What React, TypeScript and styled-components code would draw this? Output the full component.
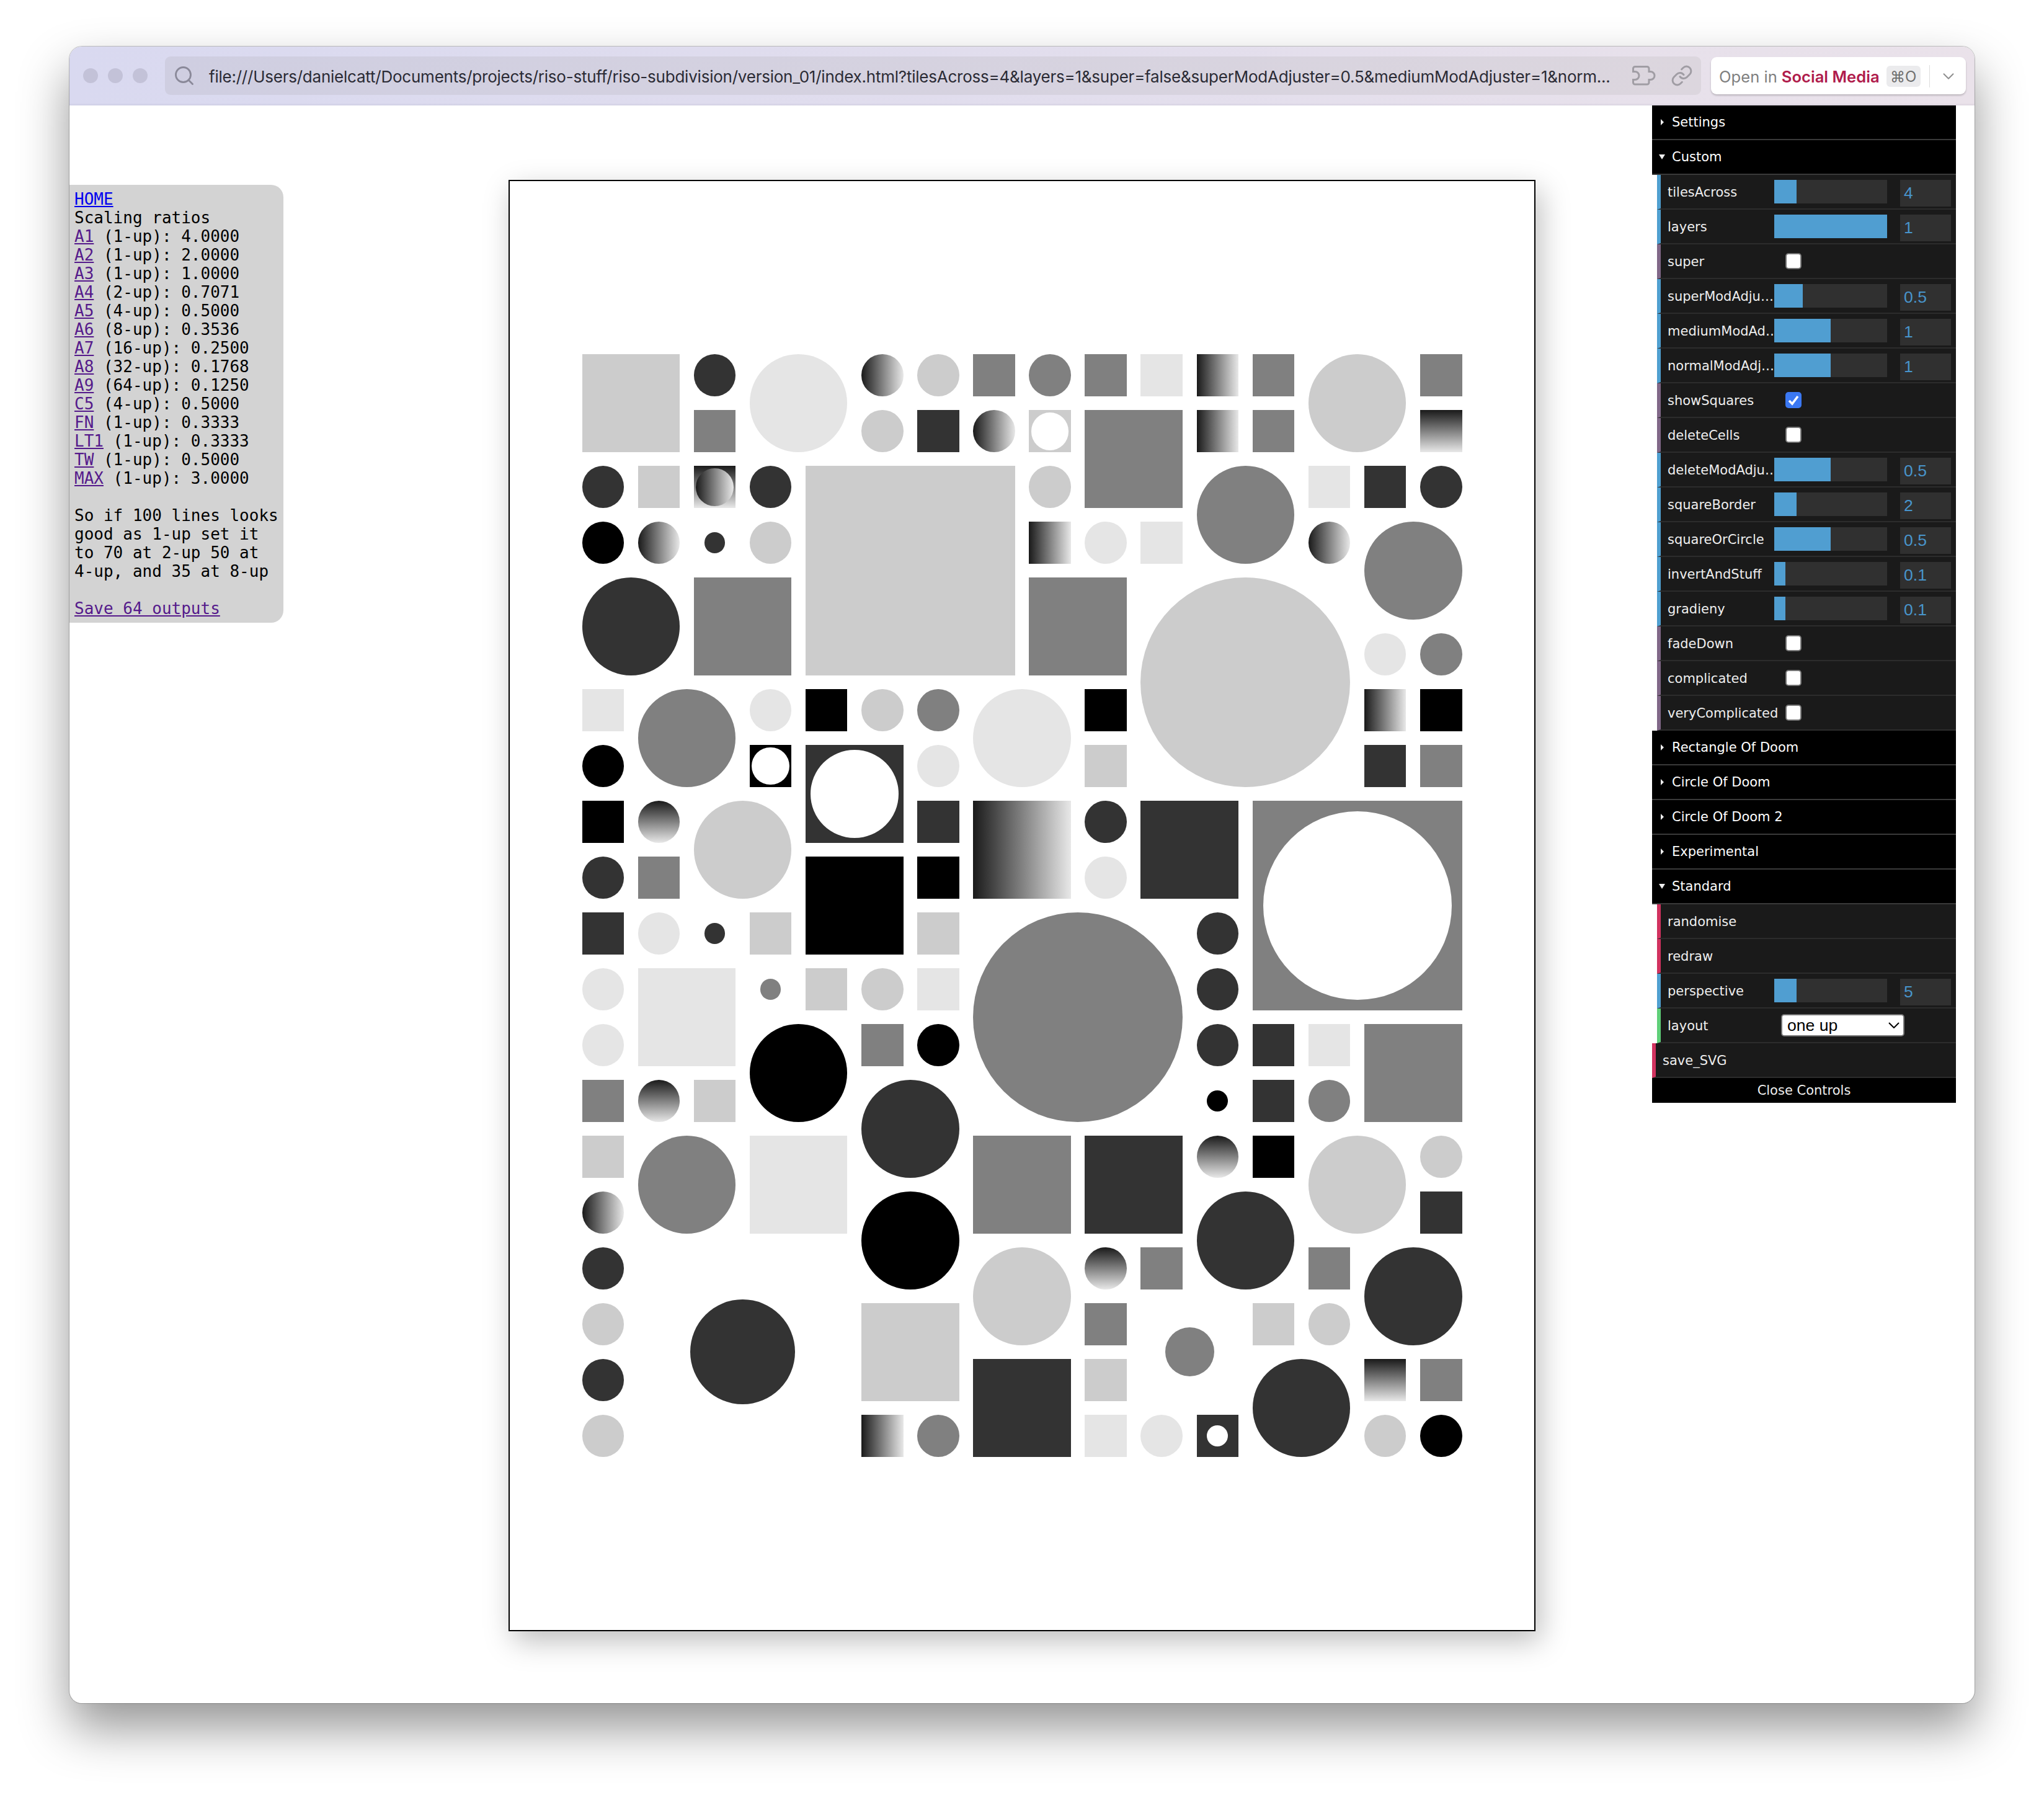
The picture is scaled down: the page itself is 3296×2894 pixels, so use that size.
import React from 'react';
import styled, { createGlobalStyle } from 'styled-components';
import { ChevronDown, Link, Search } from 'lucide-react';

const GlobalStyle = createGlobalStyle`
  html, body {
    margin: 0;
    background: #fff;
  }
`;

const Stage = styled.div`
  width: 3296px;
  height: 2894px;
  padding: 75px 112px 0;
  box-sizing: border-box;
  overflow: hidden;
`;

const Browser = styled.div`
  height: 2671px;
  display: flex;
  flex-direction: column;
  background: #fff;
  border-radius: 20px;
  box-shadow: 0 0 0 1px rgba(0, 0, 0, 0.22), 0 40px 80px rgba(0, 0, 0, 0.42);
`;

const Toolbar = styled.div`
  height: 95px;
  flex: none;
  box-sizing: border-box;
  display: flex;
  align-items: center;
  padding: 0 14px 2px 22px;
  border-radius: 20px 20px 0 0;
  background: linear-gradient(90deg, #d9d9f0, #eae2ea);
  box-shadow: inset 0 -2px 2px rgba(90, 90, 120, 0.08);
`;

const Dots = styled.div`
  display: flex;
  gap: 16px;
  margin-right: 28px;
`;

const Dot = styled.span`
  width: 24px;
  height: 24px;
  border-radius: 50%;
  background: #c3c2d8;
`;

const AddressBar = styled.div`
  width: 2477px;
  height: 62px;
  box-sizing: border-box;
  display: flex;
  align-items: center;
  padding: 0 10px 0 13px;
  margin-right: 16px;
  border-radius: 9px;
  background: linear-gradient(90deg, #cfcee1, #dcd6de);
  color: #8a8999;
`;

const Url = styled.span`
  width: 2260px;
  margin: 4px 0 0 22px;
  flex: none;
  font: 26px Inter, 'Liberation Sans', sans-serif;
  letter-spacing: -0.23px;
  color: #2b2b35;
  white-space: nowrap;
`;

const BarIcons = styled.div`
  display: flex;
  align-items: center;
  gap: 24px;
  margin-left: 35px;
  color: #a09da4;
`;

const OpenButton = styled.div`
  width: 411px;
  height: 60px;
  box-sizing: border-box;
  display: flex;
  align-items: center;
  padding: 3px 0 0 13px;
  border-radius: 9px;
  background: #fff;
  box-shadow: 0 2px 3px rgba(0, 0, 0, 0.2);
  font: 25.6px Inter, 'Liberation Sans', sans-serif;
  color: #7f7f7f;
  white-space: nowrap;
`;

const Brand = styled.b`
  margin-left: 7px;
  font-weight: 600;
  color: #b01c4c;
`;

const Shortcut = styled.span`
  width: 55px;
  height: 34px;
  margin-left: 11px;
  display: flex;
  align-items: center;
  justify-content: center;
  border-radius: 6px;
  background: #ebebed;
  color: #6f6f6f;
  font-size: 24px;
`;

const Divider = styled.span`
  width: 1px;
  height: 36px;
  margin: 0 15px 0 14px;
  background: #ddd;
`;

const Page = styled.div`
  position: relative;
  flex: 1;
  display: flex;
  justify-content: center;
  padding-top: 120px;
`;

const Notes = styled.pre`
  position: absolute;
  left: 0;
  top: 128px;
  width: 345px;
  height: 706px;
  box-sizing: border-box;
  margin: 0;
  padding: 8px 8px 0;
  border-radius: 0 20px 20px 0;
  background: #d3d3d3;
  font: 26px 'DejaVu Sans Mono', monospace;
  color: #000;
  a {
    color: #551a8b;
  }
  a.fresh {
    color: #0000ee;
  }
`;

const Sheet = styled.div`
  width: 1656px;
  height: 2340px;
  box-sizing: border-box;
  display: flex;
  align-items: center;
  justify-content: center;
  border: 2.5px solid #000;
  background: #fff;
  box-shadow: 8px 16px 44px rgba(0, 0, 0, 0.26);
`;

const Board = styled.div`
  display: grid;
  grid-template-columns: repeat(16, 67.6px);
  grid-template-rows: repeat(20, 67.6px);
  gap: 22.4px 22.5px;
`;

const Cell = styled.div<{ $c: number; $r: number; $n: number; $round: boolean; $fill: string; $scale: number }>`
  grid-column: ${(p) => p.$c + 1} / span ${(p) => p.$n};
  grid-row: ${(p) => p.$r + 1} / span ${(p) => p.$n};
  place-self: center;
  width: ${(p) => p.$scale * 100}%;
  aspect-ratio: 1;
  display: flex;
  align-items: center;
  justify-content: center;
  background: ${(p) => p.$fill};
  border-radius: ${(p) => (p.$round ? '50%' : '0')};
`;

const Inner = styled.div<{ $fill: string; $scale: number }>`
  width: ${(p) => p.$scale * 100}%;
  aspect-ratio: 1;
  border-radius: 50%;
  background: ${(p) => p.$fill};
`;

const Gui = styled.div`
  position: absolute;
  top: 0;
  right: 30px;
  width: 490px;
  font: 21px 'DejaVu Sans', sans-serif;
  color: #eee;
`;

const FolderTitle = styled.div`
  height: 56px;
  box-sizing: border-box;
  display: flex;
  align-items: center;
  border-bottom: 2px solid #3a3a3a;
  background: #000;
  color: #fff;
`;

const Caret = styled.span`
  width: 32px;
  display: flex;
  justify-content: center;
`;

const CaretShape = styled.i<{ $open: boolean }>`
  width: 0;
  height: 0;
  ${(p) =>
    p.$open
      ? `border-left: 5px solid transparent; border-right: 5px solid transparent; border-top: 8px solid #eee;`
      : `border-top: 5px solid transparent; border-bottom: 5px solid transparent; border-left: 5px solid #eee;`}
`;

const Nested = styled.div`
  margin-left: 8px;
`;

const Row = styled.div<{ $accent: string }>`
  height: 56px;
  box-sizing: border-box;
  display: flex;
  align-items: center;
  padding: 0 8px 0 11px;
  border-left: 6px solid ${(p) => p.$accent};
  border-bottom: 2px solid #2c2c2c;
  background: #1a1a1a;
`;

const Label = styled.span`
  width: 180px;
  margin-right: -8px;
  padding-top: 1px;
  flex: none;
  white-space: nowrap;
  overflow: hidden;
  text-overflow: ellipsis;
`;

const Track = styled.div`
  width: 182px;
  height: 38px;
  flex: none;
  align-self: flex-start;
  margin-top: 8px;
  background: #303030;
`;

const Fill = styled.div<{ $pct: number }>`
  width: ${(p) => p.$pct}%;
  height: 100%;
  background: #509ed1;
`;

const NumberBox = styled.div`
  width: 82px;
  height: 43px;
  flex: none;
  align-self: flex-start;
  box-sizing: border-box;
  margin: 8px 0 0 21px;
  padding-left: 6px;
  background: #303030;
  color: #4895cc;
  font: 26.6px/42px 'Liberation Sans', sans-serif;
`;

const Check = styled.span<{ $on: boolean }>`
  width: 26px;
  height: 26px;
  margin-left: 18px;
  box-sizing: border-box;
  display: flex;
  align-items: center;
  justify-content: center;
  border-radius: 5px;
  border: ${(p) => (p.$on ? 'none' : '2px solid #767676')};
  background: ${(p) => (p.$on ? '#3b78f2' : '#fff')};
`;

const SelectBox = styled.div`
  width: 199px;
  height: 36px;
  box-sizing: border-box;
  display: flex;
  align-items: center;
  justify-content: space-between;
  margin-left: 11px;
  padding: 0 6px 0 8px;
  border: 2px solid #767676;
  border-radius: 5px;
  background: #fff;
  color: #000;
  font: 26.6px 'Liberation Sans', sans-serif;
`;

const CloseBar = styled.div`
  height: 40px;
  display: flex;
  align-items: center;
  justify-content: center;
  background: #000;
  color: #eee;
`;

const NUMBER = '#4f9fd0';
const BOOL = '#806787';
const BUTTON = '#d1325f';
const PICK = '#5fcf78';

const DARK = '#333';
const MID = '#808080';
const LIGHT = '#ccc';
const PALE = '#e5e5e5';
const BLACK = '#000';
const WHITE = '#fff';
const SIDE = 'linear-gradient(90deg, #1a1a1a, #e8e8e8)';
const DOWN = 'linear-gradient(180deg, #1a1a1a, #e8e8e8)';

type Tile = {
  c: number;
  r: number;
  n: number;
  round: boolean;
  fill: string;
  scale?: number;
  inner?: string;
  innerScale?: number;
};

const sq = (c: number, r: number, fill: string, n = 1, inner?: string, innerScale = 0.9): Tile => ({
  c,
  r,
  n,
  round: false,
  fill,
  inner,
  innerScale,
});
const ci = (c: number, r: number, fill: string, n = 1, scale = 1): Tile => ({ c, r, n, round: true, fill, scale });

const tiles: Tile[] = [
  sq(0, 0, LIGHT, 2), ci(2, 0, DARK), sq(2, 1, MID), ci(3, 0, PALE, 2), ci(5, 0, SIDE), ci(6, 0, LIGHT),
  sq(7, 0, MID), ci(8, 0, MID), sq(9, 0, MID), sq(10, 0, PALE), sq(11, 0, SIDE), sq(12, 0, MID),
  ci(13, 0, LIGHT, 2), sq(15, 0, MID),
  ci(5, 1, LIGHT), sq(6, 1, DARK), ci(7, 1, SIDE), sq(8, 1, LIGHT, 1, WHITE), sq(9, 1, MID, 2), sq(11, 1, SIDE),
  sq(12, 1, MID), sq(15, 1, DOWN),
  ci(0, 2, DARK), sq(1, 2, LIGHT), sq(2, 2, DOWN, 1, SIDE), ci(3, 2, DARK), sq(4, 2, LIGHT, 4), ci(8, 2, LIGHT),
  ci(11, 2, MID, 2), sq(13, 2, PALE), sq(14, 2, DARK), ci(15, 2, DARK),
  ci(0, 3, BLACK), ci(1, 3, SIDE), ci(2, 3, DARK, 1, 0.5), ci(3, 3, LIGHT), sq(8, 3, SIDE), ci(9, 3, PALE),
  sq(10, 3, PALE), ci(13, 3, SIDE), ci(14, 3, MID, 2),
  ci(0, 4, DARK, 2), sq(2, 4, MID, 2), sq(8, 4, MID, 2), ci(10, 4, LIGHT, 4),
  ci(14, 5, PALE), ci(15, 5, MID),
  sq(0, 6, PALE), ci(1, 6, MID, 2), ci(3, 6, PALE), sq(4, 6, BLACK), ci(5, 6, LIGHT), ci(6, 6, MID),
  ci(7, 6, PALE, 2), sq(9, 6, BLACK), sq(14, 6, SIDE), sq(15, 6, BLACK),
  ci(0, 7, BLACK), sq(3, 7, BLACK, 1, WHITE), sq(4, 7, DARK, 2, WHITE), ci(6, 7, PALE), sq(9, 7, LIGHT),
  sq(14, 7, DARK), sq(15, 7, MID),
  sq(0, 8, BLACK), ci(1, 8, DOWN), ci(2, 8, LIGHT, 2), sq(6, 8, DARK), sq(7, 8, SIDE, 2), ci(9, 8, DARK),
  sq(10, 8, DARK, 2), sq(12, 8, MID, 4, WHITE),
  ci(0, 9, DARK), sq(1, 9, MID), sq(4, 9, BLACK, 2), sq(6, 9, BLACK), ci(9, 9, PALE),
  sq(0, 10, DARK), ci(1, 10, PALE), ci(2, 10, DARK, 1, 0.5), sq(3, 10, LIGHT), sq(6, 10, LIGHT),
  ci(7, 10, MID, 4), ci(11, 10, DARK),
  ci(0, 11, PALE), sq(1, 11, PALE, 2), ci(3, 11, MID, 1, 0.5), sq(4, 11, LIGHT), ci(5, 11, LIGHT),
  sq(6, 11, PALE), ci(11, 11, DARK),
  ci(0, 12, PALE), ci(3, 12, BLACK, 2), sq(5, 12, MID), ci(6, 12, BLACK), ci(11, 12, DARK), sq(12, 12, DARK),
  sq(13, 12, PALE), sq(14, 12, MID, 2),
  sq(0, 13, MID), ci(1, 13, DOWN), sq(2, 13, LIGHT), ci(5, 13, DARK, 2), ci(11, 13, BLACK, 1, 0.5),
  sq(12, 13, DARK), ci(13, 13, MID),
  sq(0, 14, LIGHT), ci(1, 14, MID, 2), sq(3, 14, PALE, 2), sq(7, 14, MID, 2), sq(9, 14, DARK, 2), ci(11, 14, DOWN),
  sq(12, 14, BLACK), ci(13, 14, LIGHT, 2), ci(15, 14, LIGHT),
  ci(0, 15, SIDE), ci(5, 15, BLACK, 2), ci(11, 15, DARK, 2), sq(15, 15, DARK),
  ci(0, 16, DARK), ci(1, 16, DARK, 4, 0.5), ci(7, 16, LIGHT, 2), ci(9, 16, DOWN), sq(10, 16, MID), sq(13, 16, MID),
  ci(14, 16, DARK, 2),
  ci(0, 17, LIGHT), sq(5, 17, LIGHT, 2), sq(9, 17, MID), ci(10, 17, MID, 2, 0.5), sq(12, 17, LIGHT), ci(13, 17, LIGHT),
  ci(0, 18, DARK), sq(7, 18, DARK, 2), sq(9, 18, LIGHT), ci(12, 18, DARK, 2), sq(14, 18, DOWN), sq(15, 18, MID),
  ci(0, 19, LIGHT), sq(5, 19, SIDE), ci(6, 19, MID), sq(9, 19, PALE), ci(10, 19, PALE),
  sq(11, 19, DARK, 1, WHITE, 0.5), ci(14, 19, LIGHT), ci(15, 19, BLACK),
];

const ratios: [string, string, string][] = [
  ['A1', '1', '4.0000'], ['A2', '1', '2.0000'], ['A3', '1', '1.0000'], ['A4', '2', '0.7071'],
  ['A5', '4', '0.5000'], ['A6', '8', '0.3536'], ['A7', '16', '0.2500'], ['A8', '32', '0.1768'],
  ['A9', '64', '0.1250'], ['C5', '4', '0.5000'], ['FN', '1', '0.3333'], ['LT1', '1', '0.3333'],
  ['TW', '1', '0.5000'], ['MAX', '1', '3.0000'],
];

const sliders: { name: string; pct?: number; value?: string; on?: boolean }[] = [
  { name: 'tilesAcross', pct: 19.6, value: '4' },
  { name: 'layers', pct: 100, value: '1' },
  { name: 'super', on: false },
  { name: 'superModAdjuster', pct: 25, value: '0.5' },
  { name: 'mediumModAdjuster', pct: 50, value: '1' },
  { name: 'normalModAdjuster', pct: 50, value: '1' },
  { name: 'showSquares', on: true },
  { name: 'deleteCells', on: false },
  { name: 'deleteModAdjuster', pct: 50, value: '0.5' },
  { name: 'squareBorder', pct: 20, value: '2' },
  { name: 'squareOrCircle', pct: 50, value: '0.5' },
  { name: 'invertAndStuff', pct: 10, value: '0.1' },
  { name: 'gradieny', pct: 10, value: '0.1' },
  { name: 'fadeDown', on: false },
  { name: 'complicated', on: false },
  { name: 'veryComplicated', on: false },
];

const Folder = ({ title, open = false }: { title: string; open?: boolean }) => (
  <FolderTitle>
    <Caret>
      <CaretShape $open={open} />
    </Caret>
    {title}
  </FolderTitle>
);

const SliderRow = ({ name, pct, value }: { name: string; pct: number; value: string }) => (
  <Row $accent={NUMBER}>
    <Label>{name}</Label>
    <Track>
      <Fill $pct={pct} />
    </Track>
    <NumberBox>{value}</NumberBox>
  </Row>
);

const CheckRow = ({ name, on }: { name: string; on: boolean }) => (
  <Row $accent={BOOL}>
    <Label>{name}</Label>
    <Check $on={on}>
      {on && (
        <svg width="20" height="20" viewBox="0 0 20 20">
          <path d="M3 11 L8 16 L17 4" fill="none" stroke="#fff" strokeWidth="3.6" />
        </svg>
      )}
    </Check>
  </Row>
);

const PuzzleIcon = () => (
  <svg width="38" height="32" viewBox="0 0 38 32" fill="none" stroke="currentColor" strokeWidth="3">
    <path d="M4.5 1.5 H24 a3 3 0 0 1 3 3 V9.5 h2.5 a6.5 6.5 0 0 1 0 13 H27 V27 a3 3 0 0 1 -3 3 H4.5 a3 3 0 0 1 -3 -3 V22.5 h3 a6.5 6.5 0 0 0 0 -13 h-3 V4.5 a3 3 0 0 1 3 -3 Z" />
  </svg>
);

const SelectChevron = () => (
  <svg width="18" height="10" viewBox="0 0 18 10" fill="none" stroke="#000" strokeWidth="2">
    <path d="M1 1 L9 9 L17 1" />
  </svg>
);

export default function App() {
  return (
    <>
      <GlobalStyle />
      <Stage>
        <Browser>
          <Toolbar>
            <Dots>
              <Dot />
              <Dot />
              <Dot />
            </Dots>
            <AddressBar>
              <Search size={36} strokeWidth={1.9} />
              <Url>
                file:///Users/danielcatt/Documents/projects/riso-stuff/riso-subdivision/version_01/index.html?tilesAcross=4&amp;layers=1&amp;super=false&amp;superModAdjuster=0.5&amp;mediumModAdjuster=1&amp;norm...
              </Url>
              <BarIcons>
                <PuzzleIcon />
                <Link size={36} strokeWidth={2} />
              </BarIcons>
            </AddressBar>
            <OpenButton>
              Open in
              <Brand>Social Media</Brand>
              <Shortcut>⌘O</Shortcut>
              <Divider />
              <ChevronDown size={30} strokeWidth={1.6} color="#8f8f8f" />
            </OpenButton>
          </Toolbar>
          <Page>
            <Notes>
              <a className="fresh" href="#home">HOME</a>
              {'\nScaling ratios\n'}
              {ratios.map(([size, up, ratio]) => (
                <React.Fragment key={size}>
                  <a href={`#${size}`}>{size}</a>
                  {` (${up}-up): ${ratio}\n`}
                </React.Fragment>
              ))}
              {'\nSo if 100 lines looks\ngood as 1-up set it\nto 70 at 2-up 50 at\n4-up, and 35 at 8-up\n\n'}
              <a href="#save">Save 64 outputs</a>
            </Notes>
            <Sheet>
              <Board>
                {tiles.map((t) => (
                  <Cell
                    key={`${t.c}-${t.r}`}
                    $c={t.c}
                    $r={t.r}
                    $n={t.n}
                    $round={t.round}
                    $fill={t.fill}
                    $scale={t.scale ?? 1}
                  >
                    {t.inner && <Inner $fill={t.inner} $scale={t.innerScale ?? 0.9} />}
                  </Cell>
                ))}
              </Board>
            </Sheet>
            <Gui>
              <Folder title="Settings" />
              <Folder title="Custom" open />
              <Nested>
                {sliders.map((s) =>
                  s.on === undefined ? (
                    <SliderRow key={s.name} name={s.name} pct={s.pct ?? 0} value={s.value ?? ''} />
                  ) : (
                    <CheckRow key={s.name} name={s.name} on={s.on} />
                  )
                )}
              </Nested>
              <Folder title="Rectangle Of Doom" />
              <Folder title="Circle Of Doom" />
              <Folder title="Circle Of Doom 2" />
              <Folder title="Experimental" />
              <Folder title="Standard" open />
              <Nested>
                <Row $accent={BUTTON}>
                  <Label>randomise</Label>
                </Row>
                <Row $accent={BUTTON}>
                  <Label>redraw</Label>
                </Row>
                <SliderRow name="perspective" pct={20} value="5" />
                <Row $accent={PICK}>
                  <Label>layout</Label>
                  <SelectBox>
                    one up
                    <SelectChevron />
                  </SelectBox>
                </Row>
              </Nested>
              <Row $accent={BUTTON}>
                <Label>save_SVG</Label>
              </Row>
              <CloseBar>Close Controls</CloseBar>
            </Gui>
          </Page>
        </Browser>
      </Stage>
    </>
  );
}
